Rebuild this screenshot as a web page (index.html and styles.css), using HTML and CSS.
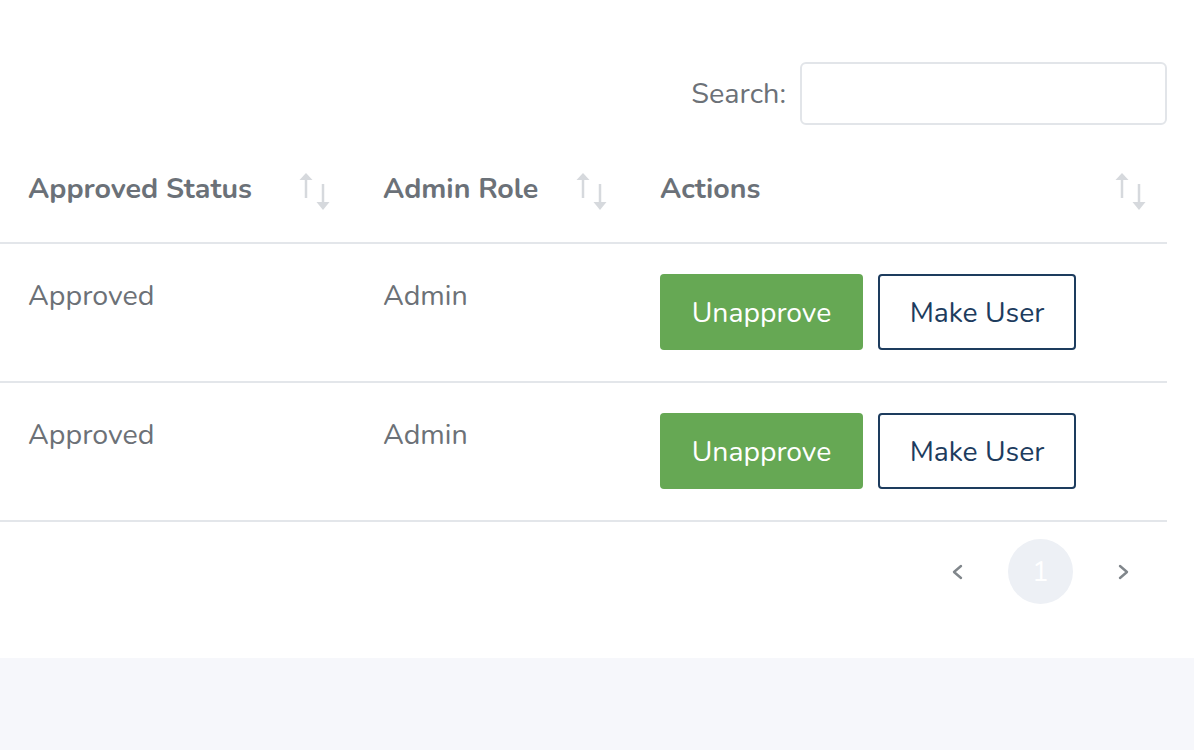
FILE: index.html
```html
<!DOCTYPE html>
<html>
<head>
<meta charset="utf-8">
<link rel="stylesheet" href="styles.css">
</head>
<body>
<div class="card">
  <div class="search-row">
    <label class="search-label">Search:</label>
    <input class="search-input" type="text">
  </div>
  <table class="tbl">
    <thead>
      <tr>
        <th class="c1"><div class="th-in"><span>Approved Status</span><svg class="sort" viewBox="0 0 34 40" width="34" height="40"><path d="M8 6 L8 27" stroke="#d6d9dd" stroke-width="2.5" fill="none"/><path d="M1.5 9 L8 2 L14.5 9 Z" fill="#d6d9dd"/><path d="M25 13 L25 34" stroke="#d6d9dd" stroke-width="2.5" fill="none"/><path d="M18.5 31 L25 39 L31.5 31 Z" fill="#d6d9dd"/></svg></div></th>
        <th class="c2"><div class="th-in"><span>Admin Role</span><svg class="sort" viewBox="0 0 34 40" width="34" height="40"><path d="M8 6 L8 27" stroke="#d6d9dd" stroke-width="2.5" fill="none"/><path d="M1.5 9 L8 2 L14.5 9 Z" fill="#d6d9dd"/><path d="M25 13 L25 34" stroke="#d6d9dd" stroke-width="2.5" fill="none"/><path d="M18.5 31 L25 39 L31.5 31 Z" fill="#d6d9dd"/></svg></div></th>
        <th class="c3"><div class="th-in"><span>Actions</span><svg class="sort" viewBox="0 0 34 40" width="34" height="40"><path d="M8 6 L8 27" stroke="#d6d9dd" stroke-width="2.5" fill="none"/><path d="M1.5 9 L8 2 L14.5 9 Z" fill="#d6d9dd"/><path d="M25 13 L25 34" stroke="#d6d9dd" stroke-width="2.5" fill="none"/><path d="M18.5 31 L25 39 L31.5 31 Z" fill="#d6d9dd"/></svg></div></th>
      </tr>
    </thead>
    <tbody>
      <tr>
        <td class="txt">Approved</td>
        <td class="txt">Admin</td>
        <td class="acts"><button class="btn btn-green">Unapprove</button><button class="btn btn-outline">Make User</button></td>
      </tr>
      <tr>
        <td class="txt">Approved</td>
        <td class="txt">Admin</td>
        <td class="acts"><button class="btn btn-green">Unapprove</button><button class="btn btn-outline">Make User</button></td>
      </tr>
    </tbody>
  </table>
  <div class="pager">
    <svg class="pg-arrow" viewBox="0 0 16 20" width="16" height="20"><path d="M12 4 L5 10 L12 16" stroke="#80868b" stroke-width="2.4" fill="none" stroke-linecap="round" stroke-linejoin="round"/></svg>
    <span class="pg-num">1</span>
    <svg class="pg-arrow" viewBox="0 0 16 20" width="16" height="20"><path d="M4 4 L11 10 L4 16" stroke="#80868b" stroke-width="2.4" fill="none" stroke-linecap="round" stroke-linejoin="round"/></svg>
  </div>
</div>
</body>
</html>
```

FILE: styles.css
```css
* { box-sizing: border-box; }
html, body { margin: 0; padding: 0; }
body {
  background: #f6f7fb;
  font-family: "Nunito", "Lato", "Noto Sans", sans-serif;
  color: #6c7177;
  width: 1194px;
  height: 750px;
  overflow: hidden;
}
.card {
  background: #ffffff;
  height: 658px;
  width: 1194px;
  padding: 62px 27px 0 0;
}
.search-row {
  display: flex;
  justify-content: flex-end;
  align-items: center;
  gap: 14px;
}
.search-label {
  font-size: 28.8px;
  color: #6c7177;
}
.search-input {
  width: 367px;
  height: 63px;
  border: 2px solid #e2e5e9;
  border-radius: 6px;
  outline: none;
  background: #fff;
}
.tbl {
  margin-top: 10px;
  width: 1167px;
  border-collapse: collapse;
  table-layout: fixed;
}
.tbl th.c1 { width: 355px; }
.tbl th.c2 { width: 277px; }
.tbl th {
  text-align: left;
  padding: 36px 19px 35px 28px;
  border-bottom: 2px solid #e3e6ea;
  font-size: 28.6px;
  font-weight: 700;
  color: #6b7178;
  line-height: 36px;
}
.tbl th.c1 { padding-right: 23px; }
.tbl th.c2 { padding-right: 23px; }
.th-in {
  display: flex;
  justify-content: space-between;
  align-items: center;
  height: 36px;
}
.sort { margin-top: 4px; flex: none; }
.tbl td {
  vertical-align: top;
  padding: 30px 28px 31px 28px;
  border-bottom: 2px solid #e3e6ea;
  font-size: 28.6px;
  color: #6c7177;
}
.tbl td.txt { padding-top: 34px; line-height: 36px; }
.acts { white-space: nowrap; }
.btn {
  height: 76px;
  font-family: inherit;
  font-size: 28.3px;
  border-radius: 4px;
  vertical-align: top;
  cursor: pointer;
  padding: 0;
}
.btn-green {
  width: 203px;
  background: #66a854;
  border: none;
  color: #ffffff;
}
.btn-outline {
  width: 198px;
  margin-left: 15px;
  background: #ffffff;
  border: 2px solid #1d3c5e;
  color: #1d3c5e;
}
.pager {
  display: flex;
  justify-content: flex-end;
  align-items: center;
  width: 1167px;
  margin-top: 17px;
  padding-right: 35px;
}
.pg-arrow {
  flex: none;
  display: block;
}
.pg-num {
  width: 65px;
  height: 65px;
  border-radius: 50%;
  background: #edf0f5;
  color: #ffffff;
  font-size: 28px;
  display: flex;
  align-items: center;
  justify-content: center;
  margin: 0 43px;
}
```
